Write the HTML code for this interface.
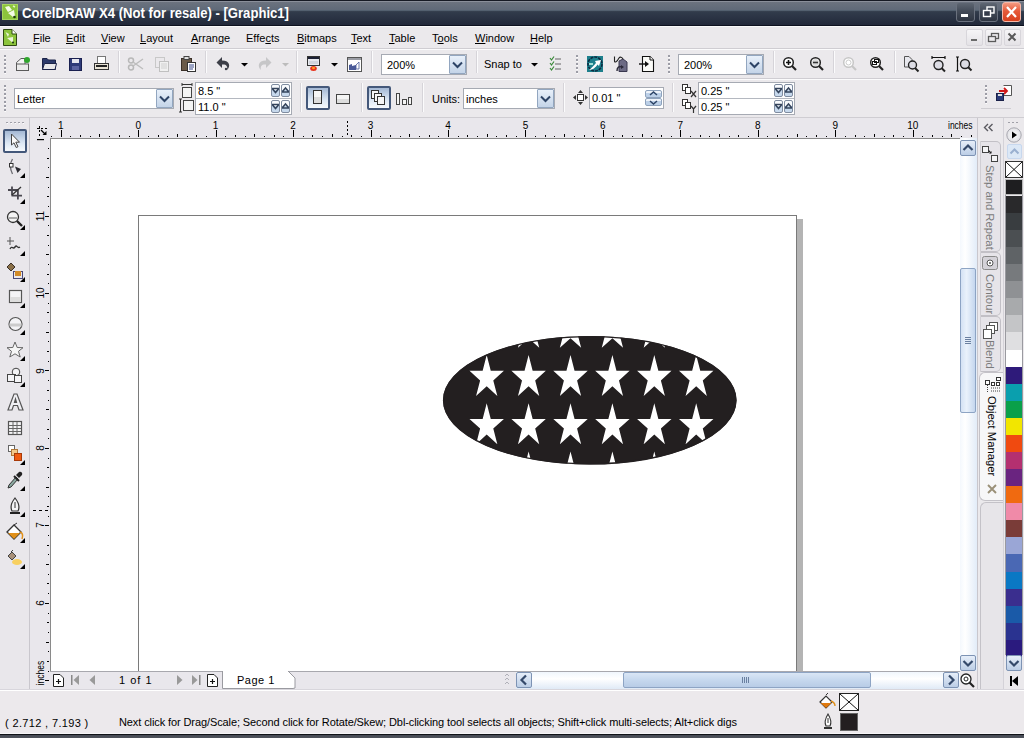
<!DOCTYPE html><html><head><meta charset="utf-8"><style>
*{margin:0;padding:0;box-sizing:border-box}
html,body{width:1024px;height:738px;overflow:hidden;background:#ECE9EC;font-family:"Liberation Sans",sans-serif;font-size:12px;color:#000}
.a{position:absolute}
svg{position:absolute;overflow:visible}
.txt{position:absolute;white-space:nowrap;font-size:12px;line-height:14px}
.mn{position:absolute;top:31px;font-size:11px;line-height:14px;white-space:nowrap;color:#000}
</style></head><body>
<div class="a" style="left:0;top:0;width:1024px;height:26px;background:linear-gradient(to bottom,#161a24 0px,#161a24 1px,#8a8f9a 1px,#8a8f9a 2px,#6c737f 2px,#5f6978 10px,#53606f 10px,#53606f 11px,#3a4452 11px,#313b4b 12px,#22293a 25px,#0e1220 25px,#0e1220 26px)"></div>
<svg style="left:2px;top:4px" width="16" height="16" viewBox="0 0 16 16" ><rect x="0" y="0" width="16" height="16" fill="#8cc43c"/><rect x="0.5" y="0.5" width="15" height="15" fill="none" stroke="#a6d65c"/><path d="M3 3 L7 2 L10 6 L6 8 Z" fill="#f4fbe6"/><path d="M6 9 L12 6 L13 12 L11 13 Z" fill="#f4fbe6"/><circle cx="12.5" cy="13" r="1.3" fill="#1d3a10"/><path d="M11 2 L13 3" stroke="#e4f4c8" stroke-width="1.5"/></svg>
<div class="txt" style="left:22px;top:5px;color:#fff;font-size:14px;line-height:16px;font-weight:bold;transform:scaleX(0.935);transform-origin:0 0">CorelDRAW X4 (Not for resale) - [Graphic1]</div>
<div class="a" style="left:956px;top:2px;width:19px;height:20px;border-radius:3px;background:linear-gradient(#5e6672,#434b58 45%,#2e3542);border:1px solid #6a717e"></div>
<div class="a" style="left:979px;top:2px;width:19px;height:20px;border-radius:3px;background:linear-gradient(#5e6672,#434b58 45%,#2e3542);border:1px solid #6a717e"></div>
<div class="a" style="left:1002px;top:2px;width:19px;height:20px;border-radius:3px;background:linear-gradient(#f49a80,#e65a3a 45%,#d8401e);border:1px solid #f7b8a8"></div>
<svg style="left:956px;top:2px" width="19" height="20" viewBox="0 0 19 20" ><rect x="5" y="12" width="7" height="3" fill="#fff"/></svg>
<svg style="left:979px;top:2px" width="19" height="20" viewBox="0 0 19 20" ><rect x="8" y="5" width="7" height="6" fill="none" stroke="#fff" stroke-width="1.4"/><rect x="4.5" y="8.5" width="7" height="6" fill="#353c4a" stroke="#fff" stroke-width="1.4"/></svg>
<svg style="left:1002px;top:2px" width="19" height="20" viewBox="0 0 19 20" ><path d="M5 5 L14 15 M14 5 L5 15" stroke="#fff" stroke-width="2.2"/></svg>
<div class="a" style="left:0px;top:26px;width:1024px;height:1px;background:#fafafa"></div>
<div class="a" style="left:0px;top:27px;width:1024px;height:22px;background:#ebe9ec"></div>
<div class="a" style="left:0px;top:48px;width:1024px;height:1px;background:#cfcdd2"></div>
<div class="a" style="left:0px;top:49px;width:1024px;height:1px;background:#fbfbfc"></div>
<svg style="left:3px;top:29px" width="14" height="17" viewBox="0 0 14 17" ><path d="M0.5 0.5 H9 L13.5 5 V16.5 H0.5 Z" fill="#8cc43c" stroke="#2f4a12"/><path d="M9 0.5 V5 H13.5" fill="#fff" stroke="#2f4a12"/><path d="M2.5 3 L6 5 L5 8 Z M4 9 L10 8 L10 14 Z" fill="#eaf5d8"/><circle cx="10" cy="13.5" r="1" fill="#173010"/></svg>
<div class="mn" style="left:33px"><u>F</u>ile</div>
<div class="mn" style="left:66px"><u>E</u>dit</div>
<div class="mn" style="left:101px"><u>V</u>iew</div>
<div class="mn" style="left:140px"><u>L</u>ayout</div>
<div class="mn" style="left:191px"><u>A</u>rrange</div>
<div class="mn" style="left:246px">Effe<u>c</u>ts</div>
<div class="mn" style="left:297px"><u>B</u>itmaps</div>
<div class="mn" style="left:351px"><u>T</u>ext</div>
<div class="mn" style="left:389px"><u>T</u>able</div>
<div class="mn" style="left:432px">T<u>o</u>ols</div>
<div class="mn" style="left:475px"><u>W</u>indow</div>
<div class="mn" style="left:530px"><u>H</u>elp</div>
<div class="a" style="left:966px;top:29px;width:17px;height:17px;border:1px solid #d8d6db;border-radius:2px;background:linear-gradient(#f6f5f7,#e4e2e6)"></div>
<div class="a" style="left:985px;top:29px;width:17px;height:17px;border:1px solid #d8d6db;border-radius:2px;background:linear-gradient(#f6f5f7,#e4e2e6)"></div>
<div class="a" style="left:1004px;top:29px;width:17px;height:17px;border:1px solid #d8d6db;border-radius:2px;background:linear-gradient(#f6f5f7,#e4e2e6)"></div>
<svg style="left:966px;top:29px" width="17" height="17" viewBox="0 0 17 17" ><rect x="5" y="10" width="6" height="2" fill="#6a6a6a"/></svg>
<svg style="left:985px;top:29px" width="17" height="17" viewBox="0 0 17 17" ><rect x="6.5" y="4.5" width="7" height="5" fill="none" stroke="#5a5a5a" stroke-width="1.3"/><rect x="3.5" y="7.5" width="7" height="5" fill="#eceaed" stroke="#5a5a5a" stroke-width="1.3"/></svg>
<svg style="left:1004px;top:29px" width="17" height="17" viewBox="0 0 17 17" ><path d="M4.5 4.5 L11.5 11.5 M11.5 4.5 L4.5 11.5" stroke="#5a5a5a" stroke-width="2"/></svg>
<div class="a" style="left:0px;top:50px;width:1024px;height:28px;background:#ebe9ec"></div>
<div class="a" style="left:0px;top:78px;width:1024px;height:1px;background:#cfcdd2"></div>
<div class="a" style="left:0px;top:79px;width:1024px;height:1px;background:#fbfbfc"></div>
<svg style="left:4px;top:55px" width="3" height="20" viewBox="0 0 3 20" ><rect x="0" y="0" width="2" height="2" fill="#9c9ca6"/><rect x="0.5" y="2" width="1.5" height="1" fill="#fff"/><rect x="0" y="4" width="2" height="2" fill="#9c9ca6"/><rect x="0.5" y="6" width="1.5" height="1" fill="#fff"/><rect x="0" y="8" width="2" height="2" fill="#9c9ca6"/><rect x="0.5" y="10" width="1.5" height="1" fill="#fff"/><rect x="0" y="12" width="2" height="2" fill="#9c9ca6"/><rect x="0.5" y="14" width="1.5" height="1" fill="#fff"/><rect x="0" y="16" width="2" height="2" fill="#9c9ca6"/><rect x="0.5" y="18" width="1.5" height="1" fill="#fff"/></svg>
<svg style="left:15px;top:56px" width="16" height="16" viewBox="0 0 16 16" ><path d="M1.5 6.5 L6 2.5 H10 V14.5 H1.5 Z" fill="#f4f4f4" stroke="#5a5a5a"/><rect x="1.5" y="8" width="12" height="6.5" fill="#eaeaea" stroke="#5a5a5a"/><circle cx="12" cy="4" r="3" fill="#2fa52c"/></svg>
<svg style="left:42px;top:57px" width="15" height="14" viewBox="0 0 15 14" ><path d="M0.5 1.5 H5 L6.5 3 H13.5 V12.5 H0.5 Z" fill="#2c3a6a" stroke="#1c2448"/><path d="M2.5 6.5 H14.5 L13 12.5 H0.5 Z" fill="#e8e8ea" stroke="#1c2448"/></svg>
<svg style="left:69px;top:58px" width="13" height="13" viewBox="0 0 13 13" ><rect x="0.5" y="0.5" width="12" height="12" fill="#2e3a78" stroke="#1a2050"/><rect x="3" y="1" width="7" height="4" fill="#e6e6ee"/><rect x="3" y="8" width="7" height="4" fill="#5a62a0"/></svg>
<svg style="left:94px;top:56px" width="15" height="15" viewBox="0 0 15 15" ><rect x="3.5" y="0.5" width="8" height="8" fill="#fff" stroke="#777"/><rect x="0.5" y="7.5" width="14" height="6" fill="#e8e2d4" stroke="#333"/><rect x="2" y="9" width="11" height="2" fill="#222"/></svg>
<div class="a" style="left:118px;top:51px;width:1px;height:22px;background:#d6d4d9"></div>
<div class="a" style="left:119px;top:51px;width:1px;height:22px;background:#fbfbfc"></div>
<svg style="left:128px;top:57px" width="16" height="14" viewBox="0 0 16 14" ><circle cx="3" cy="10.5" r="2.5" fill="none" stroke="#b8b8b8" stroke-width="1.5"/><circle cx="3" cy="3.5" r="2.5" fill="none" stroke="#b8b8b8" stroke-width="1.5"/><path d="M5 9 L15 2 M5 5 L15 12" stroke="#bdbdbd" stroke-width="1.5"/></svg>
<svg style="left:155px;top:57px" width="14" height="15" viewBox="0 0 14 15" ><rect x="0.5" y="0.5" width="9" height="10" fill="none" stroke="#c8c8c8"/><rect x="4.5" y="4.5" width="9" height="10" fill="#f0f0f0" stroke="#c0c0c0"/><path d="M6 7H12M6 9H12M6 11H12" stroke="#d0d0d0"/></svg>
<svg style="left:181px;top:56px" width="15" height="16" viewBox="0 0 15 16" ><rect x="0.5" y="2.5" width="10" height="12" fill="#6a5a48" stroke="#3a3028"/><rect x="3" y="0.5" width="5" height="3" fill="#ddd" stroke="#444"/><rect x="6.5" y="6.5" width="8" height="9" fill="#fff" stroke="#333"/><path d="M8 9H13M8 11H13M8 13H12" stroke="#3a4a8a"/></svg>
<div class="a" style="left:205px;top:51px;width:1px;height:22px;background:#d6d4d9"></div>
<div class="a" style="left:206px;top:51px;width:1px;height:22px;background:#fbfbfc"></div>
<svg style="left:216px;top:56px" width="16" height="16" viewBox="0 0 16 16" ><path d="M6 1 L0.5 6.5 L6 12 V8.5 C10 8 12 10 11 14 C14.5 11 14.5 4.5 6 4.5 Z" fill="#3d3f48"/><circle cx="10" cy="13" r="1.2" fill="#3d3f48"/></svg>
<svg style="left:240.5px;top:62.5px" width="7" height="4" viewBox="0 0 7 4" ><path d="M0 0 H7 L3.5 3.5 Z" fill="#000"/></svg>
<svg style="left:256px;top:56px" width="16" height="16" viewBox="0 0 16 16" ><path d="M10 1 L15.5 6.5 L10 12 V8.5 C6 8 4 10 5 14 C1.5 11 1.5 4.5 10 4.5 Z" fill="#c6c6c8"/></svg>
<svg style="left:281.5px;top:62.5px" width="7" height="4" viewBox="0 0 7 4" ><path d="M0 0 H7 L3.5 3.5 Z" fill="#bcbcbc"/></svg>
<div class="a" style="left:296px;top:51px;width:1px;height:22px;background:#d6d4d9"></div>
<div class="a" style="left:297px;top:51px;width:1px;height:22px;background:#fbfbfc"></div>
<svg style="left:307px;top:56px" width="14" height="16" viewBox="0 0 14 16" ><rect x="0.5" y="0.5" width="12" height="9" fill="#e6e8ee" stroke="#333"/><rect x="1" y="1" width="11" height="2" fill="#1c2034"/><rect x="2" y="5" width="9" height="3" fill="#d0d4dc"/><ellipse cx="6.5" cy="12.5" rx="3.3" ry="2.5" fill="#e8301a"/><ellipse cx="6.5" cy="12" rx="1.5" ry="1.2" fill="#f8a020"/></svg>
<svg style="left:331px;top:62.5px" width="7" height="4" viewBox="0 0 7 4" ><path d="M0 0 H7 L3.5 3.5 Z" fill="#000"/></svg>
<svg style="left:347px;top:57px" width="15" height="15" viewBox="0 0 15 15" ><rect x="0.5" y="0.5" width="14" height="14" fill="#fff" stroke="#555"/><rect x="1" y="1" width="13" height="2" fill="#9a9ca4"/><path d="M2 13 V8 L5 7 V9 L9 8 V13 Z" fill="#4a5a98"/><path d="M9 8 L12 5 V12 H9 Z" fill="#fff" stroke="#4a5a98" stroke-width="0.8"/></svg>
<div class="a" style="left:371px;top:51px;width:1px;height:22px;background:#d6d4d9"></div>
<div class="a" style="left:372px;top:51px;width:1px;height:22px;background:#fbfbfc"></div>
<div class="a" style="left:381px;top:54px;width:86px;height:21px;background:#fff;border:1px solid #a6aab3"></div>
<div class="a" style="left:449px;top:55px;width:17px;height:19px;border:1px solid #92a6c0;background:linear-gradient(#e8f0fa,#c4d4e8);border-radius:1px"></div>
<svg style="left:449px;top:55px" width="17" height="19" viewBox="0 0 17 19" ><path d="M4.0 7.5 L8.5 12.0 L13.0 7.5" fill="none" stroke="#2e4466" stroke-width="2"/></svg>
<div class="txt" style="left:387px;top:58px;font-size:11px">200%</div>
<div class="a" style="left:476px;top:51px;width:1px;height:22px;background:#d6d4d9"></div>
<div class="a" style="left:477px;top:51px;width:1px;height:22px;background:#fbfbfc"></div>
<div class="txt" style="left:484px;top:57px;font-size:11px">Snap to</div>
<svg style="left:531px;top:62.5px" width="7" height="4" viewBox="0 0 7 4" ><path d="M0 0 H7 L3.5 3.5 Z" fill="#000"/></svg>
<svg style="left:549px;top:56px" width="13" height="16" viewBox="0 0 13 16" ><path d="M1 2 L2.5 4 L5 0.5 M1 7 L2.5 9 L5 5.5 M1 12 L2.5 14 L5 10.5" stroke="#3a8a3a" fill="none" stroke-width="1.2"/><path d="M6 3H12M6 8H12M6 13H12" stroke="#666" stroke-width="1.2"/></svg>
<svg style="left:576px;top:55px" width="3" height="20" viewBox="0 0 3 20" ><rect x="0" y="0" width="2" height="2" fill="#9c9ca6"/><rect x="0.5" y="2" width="1.5" height="1" fill="#fff"/><rect x="0" y="4" width="2" height="2" fill="#9c9ca6"/><rect x="0.5" y="6" width="1.5" height="1" fill="#fff"/><rect x="0" y="8" width="2" height="2" fill="#9c9ca6"/><rect x="0.5" y="10" width="1.5" height="1" fill="#fff"/><rect x="0" y="12" width="2" height="2" fill="#9c9ca6"/><rect x="0.5" y="14" width="1.5" height="1" fill="#fff"/><rect x="0" y="16" width="2" height="2" fill="#9c9ca6"/><rect x="0.5" y="18" width="1.5" height="1" fill="#fff"/></svg>
<svg style="left:587px;top:56px" width="16" height="16" viewBox="0 0 16 16" ><rect x="0" y="0" width="16" height="16" fill="#1d7f8c"/><circle cx="8" cy="8" r="7" fill="none" stroke="#0c2a40" stroke-width="1.6" stroke-dasharray="3 1"/><path d="M2 14 C5 12 7 9 9 7 L8 5 L14 4 L12 10 L10.5 8.5 C9 11 6 14 2 14 Z" fill="#fff"/><path d="M2 8 H6" stroke="#cfe" stroke-width="1.5"/></svg>
<svg style="left:614px;top:56px" width="14" height="16" viewBox="0 0 14 16" ><path d="M5 5 L9 3 L13 6 V15.5 H5 Z" fill="#6c6a84" stroke="#3a3850"/><path d="M0.5 0.5 V5 C0.5 7 3 6 5 2 C6 0.5 8 1 9 3" fill="none" stroke="#222" stroke-width="1.1"/><path d="M3 15 C3 11 5 10 8 11" fill="none" stroke="#2a2838" stroke-width="1.4"/><path d="M7 9 L10 11 L7 13 Z" fill="#2a2838"/></svg>
<svg style="left:639px;top:56px" width="16" height="16" viewBox="0 0 16 16" ><path d="M3.5 0.5 H11 L14.5 4 V15.5 H3.5 Z" fill="#fbfbf8" stroke="#111" stroke-width="1.1"/><path d="M11 0.5 V4 H14.5" fill="#fff" stroke="#111"/><path d="M0 8 H8" stroke="#111" stroke-width="1.4"/><path d="M6 5 L10 8 L6 11 Z" fill="#111"/></svg>
<svg style="left:668px;top:55px" width="3" height="20" viewBox="0 0 3 20" ><rect x="0" y="0" width="2" height="2" fill="#9c9ca6"/><rect x="0.5" y="2" width="1.5" height="1" fill="#fff"/><rect x="0" y="4" width="2" height="2" fill="#9c9ca6"/><rect x="0.5" y="6" width="1.5" height="1" fill="#fff"/><rect x="0" y="8" width="2" height="2" fill="#9c9ca6"/><rect x="0.5" y="10" width="1.5" height="1" fill="#fff"/><rect x="0" y="12" width="2" height="2" fill="#9c9ca6"/><rect x="0.5" y="14" width="1.5" height="1" fill="#fff"/><rect x="0" y="16" width="2" height="2" fill="#9c9ca6"/><rect x="0.5" y="18" width="1.5" height="1" fill="#fff"/></svg>
<div class="a" style="left:678px;top:54px;width:86px;height:21px;background:#fff;border:1px solid #a6aab3"></div>
<div class="a" style="left:746px;top:55px;width:17px;height:19px;border:1px solid #92a6c0;background:linear-gradient(#e8f0fa,#c4d4e8);border-radius:1px"></div>
<svg style="left:746px;top:55px" width="17" height="19" viewBox="0 0 17 19" ><path d="M4.0 7.5 L8.5 12.0 L13.0 7.5" fill="none" stroke="#2e4466" stroke-width="2"/></svg>
<div class="txt" style="left:684px;top:58px;font-size:11px">200%</div>
<div class="a" style="left:773px;top:51px;width:1px;height:22px;background:#d6d4d9"></div>
<div class="a" style="left:774px;top:51px;width:1px;height:22px;background:#fbfbfc"></div>
<svg style="left:783px;top:57px" width="14" height="14" viewBox="0 0 14 14" ><circle cx="5.5" cy="5.5" r="4.8" fill="#fff" stroke="#222" stroke-width="1.5"/><path d="M3 5.5H8M5.5 3V8" stroke="#111" stroke-width="1.6"/><path d="M9 9 L13 13" stroke="#222" stroke-width="2.2"/></svg>
<svg style="left:810px;top:57px" width="14" height="14" viewBox="0 0 14 14" ><circle cx="5.5" cy="5.5" r="4.8" fill="#fff" stroke="#222" stroke-width="1.5"/><path d="M3 5.5H8" stroke="#111" stroke-width="1.6"/><circle cx="5.5" cy="5.5" r="3.5" fill="#888" opacity="0.3"/><path d="M9 9 L13 13" stroke="#222" stroke-width="2.2"/></svg>
<div class="a" style="left:833px;top:51px;width:1px;height:22px;background:#d6d4d9"></div>
<div class="a" style="left:834px;top:51px;width:1px;height:22px;background:#fbfbfc"></div>
<svg style="left:843px;top:57px" width="14" height="14" viewBox="0 0 14 14" ><circle cx="5.5" cy="5.5" r="4.8" fill="#fff" stroke="#c6c6c6" stroke-width="1.5"/><circle cx="5.5" cy="5.5" r="2.5" fill="none" stroke="#ccc"/><path d="M9 9 L13 13" stroke="#c6c6c6" stroke-width="2.2"/></svg>
<svg style="left:870px;top:57px" width="14" height="14" viewBox="0 0 14 14" ><circle cx="5.5" cy="5.5" r="4.8" fill="#fff" stroke="#222" stroke-width="1.5"/><rect x="2.5" y="4.5" width="4" height="3" fill="none" stroke="#111"/><rect x="4.5" y="2.5" width="4" height="3" fill="none" stroke="#111"/><path d="M9 9 L13 13" stroke="#222" stroke-width="2.2"/></svg>
<div class="a" style="left:894px;top:51px;width:1px;height:22px;background:#d6d4d9"></div>
<div class="a" style="left:895px;top:51px;width:1px;height:22px;background:#fbfbfc"></div>
<svg style="left:904px;top:56px" width="16" height="16" viewBox="0 0 16 16" ><path d="M0.5 0.5 H5 L8 3.5 V11 H0.5 Z" fill="#e8e8ee" stroke="#555"/><circle cx="8.5" cy="9" r="4" fill="#dcdce4" stroke="#222" stroke-width="1.4"/><path d="M11 12 L14.5 15.5" stroke="#222" stroke-width="2"/></svg>
<svg style="left:931px;top:56px" width="16" height="16" viewBox="0 0 16 16" ><path d="M1 1.5H14M1 0V3M14 0V3" stroke="#111" stroke-width="1.2"/><circle cx="7.5" cy="9" r="4.5" fill="#dcdce4" stroke="#222" stroke-width="1.4"/><path d="M10.5 12 L14 15.5" stroke="#222" stroke-width="2"/></svg>
<svg style="left:956px;top:56px" width="16" height="16" viewBox="0 0 16 16" ><path d="M1.5 1V15M0 1H3M0 15H3" stroke="#111" stroke-width="1.2"/><circle cx="9" cy="8" r="4.5" fill="#dcdce4" stroke="#222" stroke-width="1.4"/><path d="M12 11 L15.5 14.5" stroke="#222" stroke-width="2"/></svg>
<div class="a" style="left:0px;top:80px;width:1024px;height:37px;background:#ebe9ec"></div>
<div class="a" style="left:0px;top:117px;width:1024px;height:1px;background:#cfcdd2"></div>
<svg style="left:4px;top:85px" width="3" height="28" viewBox="0 0 3 28" ><rect x="0" y="0" width="2" height="2" fill="#9c9ca6"/><rect x="0.5" y="2" width="1.5" height="1" fill="#fff"/><rect x="0" y="4" width="2" height="2" fill="#9c9ca6"/><rect x="0.5" y="6" width="1.5" height="1" fill="#fff"/><rect x="0" y="8" width="2" height="2" fill="#9c9ca6"/><rect x="0.5" y="10" width="1.5" height="1" fill="#fff"/><rect x="0" y="12" width="2" height="2" fill="#9c9ca6"/><rect x="0.5" y="14" width="1.5" height="1" fill="#fff"/><rect x="0" y="16" width="2" height="2" fill="#9c9ca6"/><rect x="0.5" y="18" width="1.5" height="1" fill="#fff"/><rect x="0" y="20" width="2" height="2" fill="#9c9ca6"/><rect x="0.5" y="22" width="1.5" height="1" fill="#fff"/><rect x="0" y="24" width="2" height="2" fill="#9c9ca6"/><rect x="0.5" y="26" width="1.5" height="1" fill="#fff"/></svg>
<div class="a" style="left:14px;top:88px;width:160px;height:21px;background:#fff;border:1px solid #a6aab3"></div>
<div class="a" style="left:156px;top:89px;width:17px;height:19px;border:1px solid #92a6c0;background:linear-gradient(#e8f0fa,#c4d4e8);border-radius:1px"></div>
<svg style="left:156px;top:89px" width="17" height="19" viewBox="0 0 17 19" ><path d="M4.0 7.5 L8.5 12.0 L13.0 7.5" fill="none" stroke="#2e4466" stroke-width="2"/></svg>
<div class="txt" style="left:17px;top:92px;font-size:11px">Letter</div>
<svg style="left:180px;top:83px" width="14" height="15" viewBox="0 0 14 15" ><path d="M2 1.5H12M2 0V3M12 0V3" stroke="#333" stroke-width="1"/><rect x="2.5" y="4.5" width="9" height="10" fill="#f4f4f4" stroke="#444"/></svg>
<svg style="left:178px;top:98px" width="16" height="15" viewBox="0 0 16 15" ><path d="M2.5 1V14M1 1H4M1 14H4" stroke="#333" stroke-width="1"/><rect x="5.5" y="2.5" width="10" height="10" fill="#f4f4f4" stroke="#444"/></svg>
<div class="a" style="left:195px;top:82px;width:97px;height:33px;background:#fff;border:1px solid #a6aab3"></div>
<div class="a" style="left:196px;top:98px;width:95px;height:1px;background:#b4b8c0"></div>
<div class="txt" style="left:198px;top:84px;font-size:11px">8.5 "</div>
<div class="a" style="left:271px;top:84px;width:9px;height:13px;border:1px solid #7f8ca0;border-radius:2px;background:linear-gradient(#f8fafd 45%,#c6d8ec 45%)"></div>
<svg style="left:271px;top:84px" width="9" height="13" viewBox="0 0 9 13" ><path d="M1 4.5 H8 M1.5 5 L4.5 8.5 L7.5 5" fill="none" stroke="#34445c" stroke-width="1.6"/></svg>
<div class="a" style="left:281px;top:84px;width:9px;height:13px;border:1px solid #7f8ca0;border-radius:2px;background:linear-gradient(#f8fafd 45%,#c6d8ec 45%)"></div>
<svg style="left:281px;top:84px" width="9" height="13" viewBox="0 0 9 13" ><path d="M1 8 H8 M1.5 7.5 L4.5 4 L7.5 7.5" fill="none" stroke="#34445c" stroke-width="1.6"/></svg>
<div class="txt" style="left:198px;top:100px;font-size:11px">11.0 "</div>
<div class="a" style="left:271px;top:100px;width:9px;height:13px;border:1px solid #7f8ca0;border-radius:2px;background:linear-gradient(#f8fafd 45%,#c6d8ec 45%)"></div>
<svg style="left:271px;top:100px" width="9" height="13" viewBox="0 0 9 13" ><path d="M1 4.5 H8 M1.5 5 L4.5 8.5 L7.5 5" fill="none" stroke="#34445c" stroke-width="1.6"/></svg>
<div class="a" style="left:281px;top:100px;width:9px;height:13px;border:1px solid #7f8ca0;border-radius:2px;background:linear-gradient(#f8fafd 45%,#c6d8ec 45%)"></div>
<svg style="left:281px;top:100px" width="9" height="13" viewBox="0 0 9 13" ><path d="M1 8 H8 M1.5 7.5 L4.5 4 L7.5 7.5" fill="none" stroke="#34445c" stroke-width="1.6"/></svg>
<div class="a" style="left:300px;top:83px;width:1px;height:29px;background:#d6d4d9"></div>
<div class="a" style="left:301px;top:83px;width:1px;height:29px;background:#fbfbfc"></div>
<div class="a" style="left:306px;top:86px;width:24px;height:24px;border:2px solid #44587a;border-radius:2px;background:linear-gradient(#a4b8d4,#dce7f4 60%,#f6f9fc)"></div>
<svg style="left:306px;top:86px" width="24" height="24" viewBox="0 0 24 24" ><rect x="7.5" y="4.5" width="8" height="13" fill="#f6f6f6" stroke="#333"/><rect x="8" y="11" width="7" height="6" fill="#ddd"/></svg>
<svg style="left:336px;top:94px" width="15" height="11" viewBox="0 0 15 11" ><rect x="0.5" y="0.5" width="13" height="9" fill="#f4f4f4" stroke="#444"/><rect x="1" y="5" width="12" height="4" fill="#ddd"/></svg>
<div class="a" style="left:361px;top:83px;width:1px;height:29px;background:#d6d4d9"></div>
<div class="a" style="left:362px;top:83px;width:1px;height:29px;background:#fbfbfc"></div>
<div class="a" style="left:367px;top:86px;width:24px;height:24px;border:2px solid #44587a;border-radius:2px;background:linear-gradient(#a4b8d4,#dce7f4 60%,#f6f9fc)"></div>
<svg style="left:367px;top:86px" width="24" height="24" viewBox="0 0 24 24" ><rect x="4.5" y="4.5" width="7" height="8" fill="#f6f6f6" stroke="#333"/><rect x="7.5" y="7.5" width="7" height="8" fill="#f6f6f6" stroke="#333"/><rect x="10.5" y="10.5" width="7" height="8" fill="#f6f6f6" stroke="#333"/></svg>
<svg style="left:396px;top:93px" width="17" height="13" viewBox="0 0 17 13" ><rect x="0.5" y="0.5" width="3" height="11" fill="#f4f4f4" stroke="#444"/><rect x="6.5" y="6.5" width="4" height="5" fill="#f4f4f4" stroke="#444"/><rect x="12.5" y="4.5" width="3" height="7" fill="#f4f4f4" stroke="#444"/></svg>
<div class="a" style="left:422px;top:83px;width:1px;height:29px;background:#d6d4d9"></div>
<div class="a" style="left:423px;top:83px;width:1px;height:29px;background:#fbfbfc"></div>
<div class="txt" style="left:432px;top:92px;font-size:11px">Units:</div>
<div class="a" style="left:463px;top:88px;width:92px;height:21px;background:#fff;border:1px solid #a6aab3"></div>
<div class="a" style="left:537px;top:89px;width:17px;height:19px;border:1px solid #92a6c0;background:linear-gradient(#e8f0fa,#c4d4e8);border-radius:1px"></div>
<svg style="left:537px;top:89px" width="17" height="19" viewBox="0 0 17 19" ><path d="M4.0 7.5 L8.5 12.0 L13.0 7.5" fill="none" stroke="#2e4466" stroke-width="2"/></svg>
<div class="txt" style="left:466px;top:92px;font-size:11px">inches</div>
<div class="a" style="left:563px;top:83px;width:1px;height:29px;background:#d6d4d9"></div>
<div class="a" style="left:564px;top:83px;width:1px;height:29px;background:#fbfbfc"></div>
<svg style="left:573px;top:90px" width="15" height="15" viewBox="0 0 15 15" ><rect x="4.5" y="4.5" width="6" height="6" fill="#fff" stroke="#333"/><path d="M7.5 0 L10 3 H5 Z M7.5 15 L10 12 H5 Z M0 7.5 L3 5 V10 Z M15 7.5 L12 5 V10 Z" fill="#333"/></svg>
<div class="a" style="left:589px;top:87px;width:75px;height:22px;background:#fff;border:1px solid #a6aab3"></div>
<div class="txt" style="left:592px;top:91px;font-size:11px">0.01 "</div>
<div class="a" style="left:645px;top:90px;width:17px;height:8px;border:1px solid #8ea2bc;border-radius:2px;background:linear-gradient(#eef3fa 40%,#bcd0e8 40%)"></div>
<div class="a" style="left:645px;top:98px;width:17px;height:8px;border:1px solid #8ea2bc;border-radius:2px;background:linear-gradient(#eef3fa 40%,#bcd0e8 40%)"></div>
<svg style="left:645px;top:90px" width="17" height="16" viewBox="0 0 17 16" ><path d="M5 5 L8.5 2 L12 5" fill="none" stroke="#2e4466" stroke-width="1.5"/><path d="M5 11 L8.5 14 L12 11" fill="none" stroke="#2e4466" stroke-width="1.5"/></svg>
<div class="a" style="left:672px;top:83px;width:1px;height:29px;background:#d6d4d9"></div>
<div class="a" style="left:673px;top:83px;width:1px;height:29px;background:#fbfbfc"></div>
<svg style="left:682px;top:84px" width="16" height="14" viewBox="0 0 16 14" ><rect x="0.5" y="0.5" width="5" height="6" fill="#fff" stroke="#333"/><rect x="3.5" y="3.5" width="5" height="6" fill="#fff" stroke="#333"/><path d="M9 7 L14 13 M14 7 L9 13" stroke="#333" stroke-width="1.2"/></svg>
<svg style="left:682px;top:99px" width="16" height="14" viewBox="0 0 16 14" ><rect x="0.5" y="0.5" width="5" height="6" fill="#fff" stroke="#333"/><rect x="3.5" y="3.5" width="5" height="6" fill="#fff" stroke="#333"/><path d="M9 7 L11.5 10 L14 7 M11.5 10 V14" fill="none" stroke="#333" stroke-width="1.2"/></svg>
<div class="a" style="left:698px;top:82px;width:97px;height:33px;background:#fff;border:1px solid #a6aab3"></div>
<div class="a" style="left:699px;top:98px;width:95px;height:1px;background:#b4b8c0"></div>
<div class="txt" style="left:701px;top:84px;font-size:11px">0.25 "</div>
<div class="a" style="left:774px;top:84px;width:9px;height:13px;border:1px solid #7f8ca0;border-radius:2px;background:linear-gradient(#f8fafd 45%,#c6d8ec 45%)"></div>
<svg style="left:774px;top:84px" width="9" height="13" viewBox="0 0 9 13" ><path d="M1 4.5 H8 M1.5 5 L4.5 8.5 L7.5 5" fill="none" stroke="#34445c" stroke-width="1.6"/></svg>
<div class="a" style="left:784px;top:84px;width:9px;height:13px;border:1px solid #7f8ca0;border-radius:2px;background:linear-gradient(#f8fafd 45%,#c6d8ec 45%)"></div>
<svg style="left:784px;top:84px" width="9" height="13" viewBox="0 0 9 13" ><path d="M1 8 H8 M1.5 7.5 L4.5 4 L7.5 7.5" fill="none" stroke="#34445c" stroke-width="1.6"/></svg>
<div class="txt" style="left:701px;top:100px;font-size:11px">0.25 "</div>
<div class="a" style="left:774px;top:100px;width:9px;height:13px;border:1px solid #7f8ca0;border-radius:2px;background:linear-gradient(#f8fafd 45%,#c6d8ec 45%)"></div>
<svg style="left:774px;top:100px" width="9" height="13" viewBox="0 0 9 13" ><path d="M1 4.5 H8 M1.5 5 L4.5 8.5 L7.5 5" fill="none" stroke="#34445c" stroke-width="1.6"/></svg>
<div class="a" style="left:784px;top:100px;width:9px;height:13px;border:1px solid #7f8ca0;border-radius:2px;background:linear-gradient(#f8fafd 45%,#c6d8ec 45%)"></div>
<svg style="left:784px;top:100px" width="9" height="13" viewBox="0 0 9 13" ><path d="M1 8 H8 M1.5 7.5 L4.5 4 L7.5 7.5" fill="none" stroke="#34445c" stroke-width="1.6"/></svg>
<svg style="left:985px;top:85px" width="3" height="20" viewBox="0 0 3 20" ><rect x="0" y="0" width="2" height="2" fill="#9c9ca6"/><rect x="0.5" y="2" width="1.5" height="1" fill="#fff"/><rect x="0" y="4" width="2" height="2" fill="#9c9ca6"/><rect x="0.5" y="6" width="1.5" height="1" fill="#fff"/><rect x="0" y="8" width="2" height="2" fill="#9c9ca6"/><rect x="0.5" y="10" width="1.5" height="1" fill="#fff"/><rect x="0" y="12" width="2" height="2" fill="#9c9ca6"/><rect x="0.5" y="14" width="1.5" height="1" fill="#fff"/><rect x="0" y="16" width="2" height="2" fill="#9c9ca6"/><rect x="0.5" y="18" width="1.5" height="1" fill="#fff"/></svg>
<svg style="left:996px;top:85px" width="18" height="16" viewBox="0 0 18 16" ><path d="M7.5 0.5 H15.5 V10.5 H7.5" fill="#fff" stroke="#555"/><path d="M3 6 H11 M8 3 L11 6 L8 9" fill="none" stroke="#d01818" stroke-width="1.8"/><rect x="0.5" y="8.5" width="7" height="7" fill="#2a3a78" stroke="#1a2048"/><rect x="2" y="9" width="4" height="2" fill="#ddd"/></svg>
<div class="a" style="left:981px;top:108px;width:30px;height:1px;background:#cfcdd2"></div>
<div class="a" style="left:0px;top:118px;width:29px;height:572px;background:#e9e7eb"></div>
<div class="a" style="left:29px;top:118px;width:1px;height:572px;background:#c9c7cd"></div>
<svg style="left:6px;top:122px" width="20" height="3" viewBox="0 0 20 3" ><rect x="0" y="0" width="2" height="1" fill="#a0a0a8"/><rect x="1" y="1" width="1" height="1" fill="#fff"/><rect x="4" y="0" width="2" height="1" fill="#a0a0a8"/><rect x="5" y="1" width="1" height="1" fill="#fff"/><rect x="8" y="0" width="2" height="1" fill="#a0a0a8"/><rect x="9" y="1" width="1" height="1" fill="#fff"/><rect x="12" y="0" width="2" height="1" fill="#a0a0a8"/><rect x="13" y="1" width="1" height="1" fill="#fff"/><rect x="16" y="0" width="2" height="1" fill="#a0a0a8"/><rect x="17" y="1" width="1" height="1" fill="#fff"/></svg>
<div class="a" style="left:3px;top:129px;width:24px;height:24px;border:2px solid #44587a;border-radius:2px;background:linear-gradient(#a4b8d4,#dce7f4 60%,#f6f9fc)"></div>
<svg style="left:3px;top:129px" width="24" height="24" viewBox="0 0 24 24" ><path d="M8.5 5 V16 L11 13.8 L13.2 18.5 L15 17.7 L12.8 13.2 H16.5 Z" fill="#fafafa" stroke="#444" stroke-width="1"/></svg>
<svg style="left:5px;top:158px" width="20" height="18" viewBox="0 0 20 18" ><path d="M7.5 1 C5 5 5 11 7.5 16" fill="none" stroke="#6a6a70" stroke-width="1.3"/><rect x="4.5" y="5.5" width="3.5" height="3.5" fill="#fff" stroke="#333"/><path d="M10 8.5 L16 11 L12.5 15 Z" fill="#2a2a30"/></svg>
<svg style="left:20px;top:173px" width="6" height="5" viewBox="0 0 6 5" ><path d="M5 0 V5 H0 Z" fill="#000"/></svg>
<svg style="left:5px;top:184px" width="20" height="18" viewBox="0 0 20 18" ><path d="M3 6 H13.5 M7 2.5 V11.5 M6.5 11.7 H17 M12.9 6 V15.5" stroke="#4a4850" stroke-width="1.8" fill="none"/><path d="M7 11 L16 3" stroke="#333" stroke-width="1.3"/></svg>
<svg style="left:20px;top:199px" width="6" height="5" viewBox="0 0 6 5" ><path d="M5 0 V5 H0 Z" fill="#000"/></svg>
<svg style="left:5px;top:210px" width="20" height="18" viewBox="0 0 20 18" ><circle cx="8" cy="7" r="5.5" fill="#f4f4f4" stroke="#333" stroke-width="1.3"/><path d="M4 8 H12" stroke="#aaa" stroke-width="2"/><path d="M12 11 L17 16" stroke="#222" stroke-width="2.4"/></svg>
<svg style="left:20px;top:225px" width="6" height="5" viewBox="0 0 6 5" ><path d="M5 0 V5 H0 Z" fill="#000"/></svg>
<svg style="left:5px;top:236px" width="20" height="18" viewBox="0 0 20 18" ><path d="M2 5 H9 M5 1 V9" stroke="#555" stroke-width="1"/><path d="M5 13 C7 9 8 14 10 11 C12 8 12 13 15 11" fill="none" stroke="#333" stroke-width="1.4"/></svg>
<svg style="left:20px;top:251px" width="6" height="5" viewBox="0 0 6 5" ><path d="M5 0 V5 H0 Z" fill="#000"/></svg>
<svg style="left:5px;top:262px" width="20" height="18" viewBox="0 0 20 18" ><path d="M2 5 L6 1 L10 5 L6 9 Z" fill="#8a7048" stroke="#3a3028"/><rect x="8.5" y="9.5" width="9" height="7" fill="none" stroke="#4a4a78"/><rect x="10" y="9" width="6" height="5" fill="#d08a28"/></svg>
<svg style="left:20px;top:277px" width="6" height="5" viewBox="0 0 6 5" ><path d="M5 0 V5 H0 Z" fill="#000"/></svg>
<svg style="left:5px;top:288px" width="20" height="18" viewBox="0 0 20 18" ><rect x="4.5" y="2.5" width="12" height="12" fill="#f4f4f6" stroke="#555" stroke-width="1.2"/><rect x="5" y="9" width="11" height="5" fill="#ddd"/></svg>
<svg style="left:20px;top:303px" width="6" height="5" viewBox="0 0 6 5" ><path d="M5 0 V5 H0 Z" fill="#000"/></svg>
<svg style="left:5px;top:315px" width="20" height="18" viewBox="0 0 20 18" ><circle cx="10.5" cy="9" r="6.5" fill="#f4f4f6" stroke="#555" stroke-width="1.2"/><path d="M4.5 10 H16.5" stroke="#ccc" stroke-width="3"/></svg>
<svg style="left:20px;top:330px" width="6" height="5" viewBox="0 0 6 5" ><path d="M5 0 V5 H0 Z" fill="#000"/></svg>
<svg style="left:5px;top:341px" width="20" height="18" viewBox="0 0 20 18" ><path d="M10 1 L12.2 6.5 L18 6.7 L13.5 10.3 L15.2 16 L10 12.8 L4.8 16 L6.5 10.3 L2 6.7 L7.8 6.5 Z" fill="#f6f6f6" stroke="#666" stroke-width="1"/></svg>
<svg style="left:20px;top:356px" width="6" height="5" viewBox="0 0 6 5" ><path d="M5 0 V5 H0 Z" fill="#000"/></svg>
<svg style="left:5px;top:367px" width="20" height="18" viewBox="0 0 20 18" ><circle cx="11" cy="5" r="3.8" fill="#f4f4f6" stroke="#444"/><rect x="2.5" y="7.5" width="8" height="7" fill="#f4f4f6" stroke="#444"/><rect x="9.5" y="8.5" width="7" height="7" fill="#f4f4f6" stroke="#444"/></svg>
<svg style="left:20px;top:382px" width="6" height="5" viewBox="0 0 6 5" ><path d="M5 0 V5 H0 Z" fill="#000"/></svg>
<svg style="left:5px;top:393px" width="20" height="18" viewBox="0 0 20 18" ><path d="M3 17 L9 1 H12 L18 17 H14 L12.5 12.5 H8.5 L7 17 Z M9.5 9.5 H11.5 L10.5 6 Z" fill="#f0f0f4" stroke="#555" stroke-width="1.2"/></svg>
<svg style="left:5px;top:419px" width="20" height="18" viewBox="0 0 20 18" ><rect x="3.5" y="2.5" width="13" height="13" fill="#f4f4f6" stroke="#555" stroke-width="1.2"/><path d="M4 6.5H16M4 9.5H16M4 12.5H16M8 3V15M12 3V15" stroke="#666"/></svg>
<svg style="left:5px;top:445px" width="20" height="18" viewBox="0 0 20 18" ><rect x="3.5" y="0.5" width="6" height="6" fill="#fff" stroke="#666"/><rect x="6.5" y="4.5" width="6" height="6" fill="#f2c88a" stroke="#b07838"/><rect x="9.5" y="8.5" width="7" height="7" fill="#f05a10" stroke="#a83a08"/></svg>
<svg style="left:20px;top:460px" width="6" height="5" viewBox="0 0 6 5" ><path d="M5 0 V5 H0 Z" fill="#000"/></svg>
<svg style="left:5px;top:471px" width="20" height="18" viewBox="0 0 20 18" ><path d="M3 17 L4 14 L11 6 L13 8 L6 16 Z" fill="#8aa8a0" stroke="#333" stroke-width="1"/><path d="M11 4 L14 1 C16 0 18 2 17 4 L14 7 Z" fill="#222"/><path d="M9 5 L14 10" stroke="#222" stroke-width="2"/></svg>
<svg style="left:20px;top:486px" width="6" height="5" viewBox="0 0 6 5" ><path d="M5 0 V5 H0 Z" fill="#000"/></svg>
<svg style="left:5px;top:497px" width="20" height="18" viewBox="0 0 20 18" ><path d="M10 1 C6 6 5 10 7 14 H13 C15 10 14 6 10 1 Z" fill="#f4f4f6" stroke="#333" stroke-width="1.2"/><path d="M10 5 V11" stroke="#333"/><rect x="5" y="15" width="10" height="2" fill="#222"/></svg>
<svg style="left:20px;top:512px" width="6" height="5" viewBox="0 0 6 5" ><path d="M5 0 V5 H0 Z" fill="#000"/></svg>
<svg style="left:5px;top:523px" width="20" height="18" viewBox="0 0 20 18" ><path d="M2 9 L9 2 L16 9 L9 16 Z" fill="#fff" stroke="#333" stroke-width="1.3"/><path d="M3 10 L15 10 L9 16 Z" fill="#e0901a"/><path d="M9 2 L12 0" stroke="#333"/><path d="M15 9 C18 10 18 13 17 16" fill="none" stroke="#e0901a" stroke-width="1.5"/></svg>
<svg style="left:20px;top:538px" width="6" height="5" viewBox="0 0 6 5" ><path d="M5 0 V5 H0 Z" fill="#000"/></svg>
<svg style="left:5px;top:549px" width="20" height="18" viewBox="0 0 20 18" ><path d="M3 7 L7 3 L11 7 L7 11 Z" fill="#a89078" stroke="#444"/><path d="M6 3 L8 1" stroke="#444"/><ellipse cx="12" cy="13" rx="5" ry="3" fill="#f8d060"/></svg>
<svg style="left:20px;top:564px" width="6" height="5" viewBox="0 0 6 5" ><path d="M5 0 V5 H0 Z" fill="#000"/></svg>
<div class="a" style="left:30px;top:118px;width:947px;height:20px;background:#e9e7ec"></div>
<div class="a" style="left:30px;top:138px;width:20px;height:551px;background:#e9e7ec"></div>
<svg style="left:0px;top:0px" width="1024" height="140" viewBox="0 0 1024 140" ><g fill="#000"><rect x="51" y="136" width="1" height="1"/><rect x="61" y="130" width="1" height="7"/><rect x="70" y="136" width="1" height="1"/><rect x="80" y="135" width="1" height="2"/><rect x="90" y="136" width="1" height="1"/><rect x="99" y="134" width="1" height="3"/><rect x="109" y="136" width="1" height="1"/><rect x="119" y="135" width="1" height="2"/><rect x="129" y="136" width="1" height="1"/><rect x="138" y="130" width="1" height="7"/><rect x="148" y="136" width="1" height="1"/><rect x="158" y="135" width="1" height="2"/><rect x="167" y="136" width="1" height="1"/><rect x="177" y="134" width="1" height="3"/><rect x="187" y="136" width="1" height="1"/><rect x="196" y="135" width="1" height="2"/><rect x="206" y="136" width="1" height="1"/><rect x="216" y="130" width="1" height="7"/><rect x="225" y="136" width="1" height="1"/><rect x="235" y="135" width="1" height="2"/><rect x="245" y="136" width="1" height="1"/><rect x="254" y="134" width="1" height="3"/><rect x="264" y="136" width="1" height="1"/><rect x="274" y="135" width="1" height="2"/><rect x="283" y="136" width="1" height="1"/><rect x="293" y="130" width="1" height="7"/><rect x="303" y="136" width="1" height="1"/><rect x="312" y="135" width="1" height="2"/><rect x="322" y="136" width="1" height="1"/><rect x="332" y="134" width="1" height="3"/><rect x="342" y="136" width="1" height="1"/><rect x="351" y="135" width="1" height="2"/><rect x="361" y="136" width="1" height="1"/><rect x="371" y="130" width="1" height="7"/><rect x="380" y="136" width="1" height="1"/><rect x="390" y="135" width="1" height="2"/><rect x="400" y="136" width="1" height="1"/><rect x="409" y="134" width="1" height="3"/><rect x="419" y="136" width="1" height="1"/><rect x="429" y="135" width="1" height="2"/><rect x="438" y="136" width="1" height="1"/><rect x="448" y="130" width="1" height="7"/><rect x="458" y="136" width="1" height="1"/><rect x="467" y="135" width="1" height="2"/><rect x="477" y="136" width="1" height="1"/><rect x="487" y="134" width="1" height="3"/><rect x="496" y="136" width="1" height="1"/><rect x="506" y="135" width="1" height="2"/><rect x="516" y="136" width="1" height="1"/><rect x="525" y="130" width="1" height="7"/><rect x="535" y="136" width="1" height="1"/><rect x="545" y="135" width="1" height="2"/><rect x="554" y="136" width="1" height="1"/><rect x="564" y="134" width="1" height="3"/><rect x="574" y="136" width="1" height="1"/><rect x="584" y="135" width="1" height="2"/><rect x="593" y="136" width="1" height="1"/><rect x="603" y="130" width="1" height="7"/><rect x="613" y="136" width="1" height="1"/><rect x="622" y="135" width="1" height="2"/><rect x="632" y="136" width="1" height="1"/><rect x="642" y="134" width="1" height="3"/><rect x="651" y="136" width="1" height="1"/><rect x="661" y="135" width="1" height="2"/><rect x="671" y="136" width="1" height="1"/><rect x="680" y="130" width="1" height="7"/><rect x="690" y="136" width="1" height="1"/><rect x="700" y="135" width="1" height="2"/><rect x="709" y="136" width="1" height="1"/><rect x="719" y="134" width="1" height="3"/><rect x="729" y="136" width="1" height="1"/><rect x="738" y="135" width="1" height="2"/><rect x="748" y="136" width="1" height="1"/><rect x="758" y="130" width="1" height="7"/><rect x="767" y="136" width="1" height="1"/><rect x="777" y="135" width="1" height="2"/><rect x="787" y="136" width="1" height="1"/><rect x="797" y="134" width="1" height="3"/><rect x="806" y="136" width="1" height="1"/><rect x="816" y="135" width="1" height="2"/><rect x="826" y="136" width="1" height="1"/><rect x="835" y="130" width="1" height="7"/><rect x="845" y="136" width="1" height="1"/><rect x="855" y="135" width="1" height="2"/><rect x="864" y="136" width="1" height="1"/><rect x="874" y="134" width="1" height="3"/><rect x="884" y="136" width="1" height="1"/><rect x="893" y="135" width="1" height="2"/><rect x="903" y="136" width="1" height="1"/><rect x="913" y="130" width="1" height="7"/><rect x="922" y="136" width="1" height="1"/><rect x="932" y="135" width="1" height="2"/><rect x="942" y="136" width="1" height="1"/><rect x="951" y="134" width="1" height="3"/><rect x="961" y="136" width="1" height="1"/><rect x="971" y="135" width="1" height="2"/></g></svg>
<div class="txt" style="left:40.7px;top:121px;width:40px;text-align:center;font-size:10px;line-height:10px">1</div>
<div class="txt" style="left:118.2px;top:121px;width:40px;text-align:center;font-size:10px;line-height:10px">0</div>
<div class="txt" style="left:195.6px;top:121px;width:40px;text-align:center;font-size:10px;line-height:10px">1</div>
<div class="txt" style="left:273.1px;top:121px;width:40px;text-align:center;font-size:10px;line-height:10px">2</div>
<div class="txt" style="left:350.6px;top:121px;width:40px;text-align:center;font-size:10px;line-height:10px">3</div>
<div class="txt" style="left:428.0px;top:121px;width:40px;text-align:center;font-size:10px;line-height:10px">4</div>
<div class="txt" style="left:505.5px;top:121px;width:40px;text-align:center;font-size:10px;line-height:10px">5</div>
<div class="txt" style="left:582.9px;top:121px;width:40px;text-align:center;font-size:10px;line-height:10px">6</div>
<div class="txt" style="left:660.3px;top:121px;width:40px;text-align:center;font-size:10px;line-height:10px">7</div>
<div class="txt" style="left:737.8px;top:121px;width:40px;text-align:center;font-size:10px;line-height:10px">8</div>
<div class="txt" style="left:815.2px;top:121px;width:40px;text-align:center;font-size:10px;line-height:10px">9</div>
<div class="txt" style="left:892.7px;top:121px;width:40px;text-align:center;font-size:10px;line-height:10px">10</div>
<div class="txt" style="left:948px;top:121px;font-size:10px;line-height:10px;transform:scaleX(0.85);transform-origin:0 0">inches</div>
<svg style="left:347px;top:121px" width="2" height="16" viewBox="0 0 2 16" ><path d="M0.5 0 V16" stroke="#000" stroke-dasharray="2 2"/></svg>
<svg style="left:0px;top:0px" width="60" height="700" viewBox="0 0 60 700" ><g fill="#000"><rect x="48" y="148" width="1" height="1"/><rect x="47" y="158" width="2" height="1"/><rect x="48" y="167" width="1" height="1"/><rect x="46" y="177" width="3" height="1"/><rect x="48" y="187" width="1" height="1"/><rect x="47" y="196" width="2" height="1"/><rect x="48" y="206" width="1" height="1"/><rect x="45" y="216" width="4" height="1"/><rect x="48" y="225" width="1" height="1"/><rect x="47" y="235" width="2" height="1"/><rect x="48" y="245" width="1" height="1"/><rect x="46" y="254" width="3" height="1"/><rect x="48" y="264" width="1" height="1"/><rect x="47" y="274" width="2" height="1"/><rect x="48" y="283" width="1" height="1"/><rect x="45" y="293" width="4" height="1"/><rect x="48" y="303" width="1" height="1"/><rect x="47" y="312" width="2" height="1"/><rect x="48" y="322" width="1" height="1"/><rect x="46" y="332" width="3" height="1"/><rect x="48" y="341" width="1" height="1"/><rect x="47" y="351" width="2" height="1"/><rect x="48" y="361" width="1" height="1"/><rect x="45" y="370" width="4" height="1"/><rect x="48" y="380" width="1" height="1"/><rect x="47" y="390" width="2" height="1"/><rect x="48" y="400" width="1" height="1"/><rect x="46" y="409" width="3" height="1"/><rect x="48" y="419" width="1" height="1"/><rect x="47" y="429" width="2" height="1"/><rect x="48" y="438" width="1" height="1"/><rect x="45" y="448" width="4" height="1"/><rect x="48" y="458" width="1" height="1"/><rect x="47" y="467" width="2" height="1"/><rect x="48" y="477" width="1" height="1"/><rect x="46" y="487" width="3" height="1"/><rect x="48" y="496" width="1" height="1"/><rect x="47" y="506" width="2" height="1"/><rect x="48" y="516" width="1" height="1"/><rect x="45" y="525" width="4" height="1"/><rect x="48" y="535" width="1" height="1"/><rect x="47" y="545" width="2" height="1"/><rect x="48" y="554" width="1" height="1"/><rect x="46" y="564" width="3" height="1"/><rect x="48" y="574" width="1" height="1"/><rect x="47" y="583" width="2" height="1"/><rect x="48" y="593" width="1" height="1"/><rect x="45" y="603" width="4" height="1"/><rect x="48" y="613" width="1" height="1"/><rect x="47" y="622" width="2" height="1"/><rect x="48" y="632" width="1" height="1"/><rect x="46" y="642" width="3" height="1"/><rect x="48" y="651" width="1" height="1"/><rect x="47" y="661" width="2" height="1"/><rect x="48" y="671" width="1" height="1"/><rect x="45" y="680" width="4" height="1"/></g></svg>
<div class="txt" style="left:20.5px;top:597.9px;width:40px;height:10px;text-align:center;font-size:10px;line-height:10px;transform:rotate(-90deg)">6</div>
<div class="txt" style="left:20.5px;top:520.4px;width:40px;height:10px;text-align:center;font-size:10px;line-height:10px;transform:rotate(-90deg)">7</div>
<div class="txt" style="left:20.5px;top:443.0px;width:40px;height:10px;text-align:center;font-size:10px;line-height:10px;transform:rotate(-90deg)">8</div>
<div class="txt" style="left:20.5px;top:365.5px;width:40px;height:10px;text-align:center;font-size:10px;line-height:10px;transform:rotate(-90deg)">9</div>
<div class="txt" style="left:20.5px;top:288.1px;width:40px;height:10px;text-align:center;font-size:10px;line-height:10px;transform:rotate(-90deg)">10</div>
<div class="txt" style="left:20.5px;top:210.6px;width:40px;height:10px;text-align:center;font-size:10px;line-height:10px;transform:rotate(-90deg)">11</div>
<div class="txt" style="left:20.5px;top:667.8px;width:40px;height:10px;text-align:center;font-size:10px;line-height:10px;transform:rotate(-90deg) scaleX(0.85)">inches</div>
<svg style="left:33px;top:510px" width="16" height="2" viewBox="0 0 16 2" ><path d="M0 0.5 H16" stroke="#000" stroke-dasharray="3 3"/></svg>
<svg style="left:30px;top:118px" width="30" height="30" viewBox="0 0 30 30" ><path d="M7 10.5H10M11 10.5H13M15 10.5H17M9.5 8V10M9.5 12V14M9.5 16V18" stroke="#000" stroke-width="1"/><path d="M11 12 L15.5 16.5" stroke="#000" stroke-width="1.2"/><path d="M16.5 13 V17 H12.5 Z" fill="#000"/><rect x="7" y="21" width="7" height="1.2" fill="#000"/><rect x="21" y="18" width="1" height="1" fill="#000"/></svg>
<div class="a" style="left:50px;top:138px;width:910px;height:1px;background:#8a8a8a"></div>
<div class="a" style="left:50px;top:138px;width:1px;height:551px;background:#8a8a8a"></div>
<div class="a" style="left:51px;top:139px;width:909px;height:532px;background:#fff"></div>
<div class="a" style="left:138px;top:215px;width:659px;height:460px;border-left:1px solid #7a7a7a;border-top:1px solid #7a7a7a;border-right:1px solid #7a7a7a;background:#fff"></div>
<div class="a" style="left:797px;top:219px;width:6px;height:452px;background:#b4b4b4"></div>
<svg style="left:0px;top:0px" width="1024" height="738" viewBox="0 0 1024 738" ><defs><clipPath id="ec"><ellipse cx="589.75" cy="400.25" rx="146.75" ry="64.25"/></clipPath></defs><ellipse cx="589.75" cy="400.25" rx="146.75" ry="64.25" fill="#231f20"/><g clip-path="url(#ec)" fill="#fff"><polygon points="486.70,306.80 490.76,322.48 503.91,322.49 493.28,332.18 497.34,347.86 486.70,338.17 476.06,347.86 480.12,332.18 469.49,322.49 482.64,322.48"/><polygon points="528.60,306.80 532.66,322.48 545.81,322.49 535.18,332.18 539.24,347.86 528.60,338.17 517.96,347.86 522.02,332.18 511.39,322.49 524.54,322.48"/><polygon points="570.50,306.80 574.56,322.48 587.71,322.49 577.08,332.18 581.14,347.86 570.50,338.17 559.86,347.86 563.92,332.18 553.29,322.49 566.44,322.48"/><polygon points="612.40,306.80 616.46,322.48 629.61,322.49 618.98,332.18 623.04,347.86 612.40,338.17 601.76,347.86 605.82,332.18 595.19,322.49 608.34,322.48"/><polygon points="654.30,306.80 658.36,322.48 671.51,322.49 660.88,332.18 664.94,347.86 654.30,338.17 643.66,347.86 647.72,332.18 637.09,322.49 650.24,322.48"/><polygon points="696.20,306.80 700.26,322.48 713.41,322.49 702.78,332.18 706.84,347.86 696.20,338.17 685.56,347.86 689.62,332.18 678.99,322.49 692.14,322.48"/><polygon points="486.70,355.00 490.76,370.68 503.91,370.69 493.28,380.38 497.34,396.06 486.70,386.37 476.06,396.06 480.12,380.38 469.49,370.69 482.64,370.68"/><polygon points="528.60,355.00 532.66,370.68 545.81,370.69 535.18,380.38 539.24,396.06 528.60,386.37 517.96,396.06 522.02,380.38 511.39,370.69 524.54,370.68"/><polygon points="570.50,355.00 574.56,370.68 587.71,370.69 577.08,380.38 581.14,396.06 570.50,386.37 559.86,396.06 563.92,380.38 553.29,370.69 566.44,370.68"/><polygon points="612.40,355.00 616.46,370.68 629.61,370.69 618.98,380.38 623.04,396.06 612.40,386.37 601.76,396.06 605.82,380.38 595.19,370.69 608.34,370.68"/><polygon points="654.30,355.00 658.36,370.68 671.51,370.69 660.88,380.38 664.94,396.06 654.30,386.37 643.66,396.06 647.72,380.38 637.09,370.69 650.24,370.68"/><polygon points="696.20,355.00 700.26,370.68 713.41,370.69 702.78,380.38 706.84,396.06 696.20,386.37 685.56,396.06 689.62,380.38 678.99,370.69 692.14,370.68"/><polygon points="486.70,403.20 490.76,418.88 503.91,418.89 493.28,428.58 497.34,444.26 486.70,434.57 476.06,444.26 480.12,428.58 469.49,418.89 482.64,418.88"/><polygon points="528.60,403.20 532.66,418.88 545.81,418.89 535.18,428.58 539.24,444.26 528.60,434.57 517.96,444.26 522.02,428.58 511.39,418.89 524.54,418.88"/><polygon points="570.50,403.20 574.56,418.88 587.71,418.89 577.08,428.58 581.14,444.26 570.50,434.57 559.86,444.26 563.92,428.58 553.29,418.89 566.44,418.88"/><polygon points="612.40,403.20 616.46,418.88 629.61,418.89 618.98,428.58 623.04,444.26 612.40,434.57 601.76,444.26 605.82,428.58 595.19,418.89 608.34,418.88"/><polygon points="654.30,403.20 658.36,418.88 671.51,418.89 660.88,428.58 664.94,444.26 654.30,434.57 643.66,444.26 647.72,428.58 637.09,418.89 650.24,418.88"/><polygon points="696.20,403.20 700.26,418.88 713.41,418.89 702.78,428.58 706.84,444.26 696.20,434.57 685.56,444.26 689.62,428.58 678.99,418.89 692.14,418.88"/><polygon points="486.70,451.40 490.76,467.08 503.91,467.09 493.28,476.78 497.34,492.46 486.70,482.77 476.06,492.46 480.12,476.78 469.49,467.09 482.64,467.08"/><polygon points="528.60,451.40 532.66,467.08 545.81,467.09 535.18,476.78 539.24,492.46 528.60,482.77 517.96,492.46 522.02,476.78 511.39,467.09 524.54,467.08"/><polygon points="570.50,451.40 574.56,467.08 587.71,467.09 577.08,476.78 581.14,492.46 570.50,482.77 559.86,492.46 563.92,476.78 553.29,467.09 566.44,467.08"/><polygon points="612.40,451.40 616.46,467.08 629.61,467.09 618.98,476.78 623.04,492.46 612.40,482.77 601.76,492.46 605.82,476.78 595.19,467.09 608.34,467.08"/><polygon points="654.30,451.40 658.36,467.08 671.51,467.09 660.88,476.78 664.94,492.46 654.30,482.77 643.66,492.46 647.72,476.78 637.09,467.09 650.24,467.08"/><polygon points="696.20,451.40 700.26,467.08 713.41,467.09 702.78,476.78 706.84,492.46 696.20,482.77 685.56,492.46 689.62,476.78 678.99,467.09 692.14,467.08"/></g><ellipse cx="589.75" cy="400.25" rx="146.15" ry="63.65" fill="none" stroke="#231f20" stroke-width="1.4"/></svg>
<div class="a" style="left:960px;top:138px;width:17px;height:533px;background:linear-gradient(to right,#f4f8fd,#ffffff 30%,#e2ecf8)"></div>
<div class="a" style="left:960px;top:140px;width:16px;height:16px;border:1px solid #7d93b4;border-radius:2px;background:linear-gradient(#e6eef9,#bccee6)"></div>
<svg style="left:960px;top:140px" width="16" height="16" viewBox="0 0 16 16" ><path d="M3.5 10 L8 5.5 L12.5 10" fill="none" stroke="#34496a" stroke-width="2.2"/></svg>
<div class="a" style="left:960px;top:655px;width:16px;height:16px;border:1px solid #7d93b4;border-radius:2px;background:linear-gradient(#e6eef9,#bccee6)"></div>
<svg style="left:960px;top:655px" width="16" height="16" viewBox="0 0 16 16" ><path d="M3.5 6 L8 10.5 L12.5 6" fill="none" stroke="#34496a" stroke-width="2.2"/></svg>
<div class="a" style="left:960px;top:268px;width:16px;height:145px;border:1px solid #8da4c4;border-radius:2px;background:linear-gradient(to right,#d4e2f4,#eaf2fb 40%,#c4d6ee)"></div>
<svg style="left:965px;top:337px" width="6" height="7" viewBox="0 0 6 7" ><path d="M0 0.5H6M0 2.5H6M0 4.5H6M0 6.5H6" stroke="#6a80a0"/></svg>
<div class="a" style="left:977px;top:118px;width:1px;height:572px;background:#c9c7cd"></div>
<div class="a" style="left:978px;top:118px;width:26px;height:572px;background:#ebe9ec"></div>
<svg style="left:983px;top:123px" width="12" height="10" viewBox="0 0 12 10" ><path d="M5 1 L1.5 4.5 L5 8 M9.5 1 L6 4.5 L9.5 8" fill="none" stroke="#5a5a60" stroke-width="1.4"/></svg>
<div class="a" style="left:980px;top:141px;width:21px;height:111px;background:#e6e4e9;border:1px solid #c2c0c6;border-left:1px solid #d0ced4;border-radius:0 5px 5px 0"></div>
<div class="a" style="left:980px;top:252px;width:21px;height:64px;background:#e6e4e9;border:1px solid #c2c0c6;border-left:1px solid #d0ced4;border-radius:0 5px 5px 0"></div>
<div class="a" style="left:980px;top:316px;width:21px;height:56px;background:#e6e4e9;border:1px solid #c2c0c6;border-left:1px solid #d0ced4;border-radius:0 5px 5px 0"></div>
<div class="a" style="left:979px;top:372px;width:25px;height:129px;background:#f7f7f8;border:1px solid #c4c2c8;border-right:none;border-radius:6px 0 0 6px"></div>
<div class="a" style="left:980px;top:502px;width:23px;height:188px;border-left:1px solid #c4c2c8;border-top:1px solid #c4c2c8;border-radius:6px 0 0 0;background:#e7e5e9"></div>
<div class="txt" style="left:995px;top:165px;font-size:11.3px;line-height:11.3px;color:#7a7a7a;transform-origin:0 0;transform:rotate(90deg)">Step and Repeat</div>
<div class="txt" style="left:995px;top:274px;font-size:11.3px;line-height:11.3px;color:#7a7a7a;transform-origin:0 0;transform:rotate(90deg)">Contour</div>
<div class="txt" style="left:995px;top:340px;font-size:11.3px;line-height:11.3px;color:#7a7a7a;transform-origin:0 0;transform:rotate(90deg)">Blend</div>
<div class="txt" style="left:997px;top:396px;font-size:11.3px;line-height:11.3px;color:#000;transform-origin:0 0;transform:rotate(90deg)">Object Manager</div>
<svg style="left:982px;top:146px" width="17" height="17" viewBox="0 0 17 17" ><rect x="0.5" y="0.5" width="6" height="6" fill="#f4f4f6" stroke="#444"/><rect x="9.5" y="9.5" width="6" height="6" fill="#f4f4f6" stroke="#444"/><path d="M6.5 4.5 L9 7" fill="none" stroke="#222" stroke-width="1.1"/><path d="M9.5 5 V7.5 H7 Z" fill="#222"/></svg>
<svg style="left:982px;top:256px" width="16" height="14" viewBox="0 0 16 14" ><rect x="0.5" y="0.5" width="15" height="13" rx="2" fill="#d4d2d8" stroke="#8a8a8a"/><circle cx="8" cy="7" r="3" fill="#fff" stroke="#555"/><circle cx="8" cy="7" r="1" fill="#555"/></svg>
<svg style="left:983px;top:322px" width="15" height="17" viewBox="0 0 15 17" ><rect x="6.5" y="0.5" width="8" height="8" fill="#fff" stroke="#555"/><rect x="3.5" y="3.5" width="8" height="8" fill="#fff" stroke="#555"/><rect x="0.5" y="7.5" width="8" height="9" fill="#fff" stroke="#555"/></svg>
<svg style="left:985px;top:377px" width="16" height="16" viewBox="0 0 16 16" ><rect x="11.5" y="0.5" width="4" height="3" fill="#fff" stroke="#333"/><rect x="0.5" y="3.5" width="4" height="4" fill="#fff" stroke="#333"/><rect x="6.5" y="5.5" width="3" height="3" fill="#fff" stroke="#333"/><rect x="11.5" y="5.5" width="3" height="3" fill="#fff" stroke="#333"/><path d="M2.5 8 V15 M6 11 H15 M6 14 H15" stroke="#444" stroke-dasharray="1 1"/></svg>
<svg style="left:987px;top:484px" width="10" height="10" viewBox="0 0 10 10" ><path d="M1 1 L9 9 M9 1 L1 9" stroke="#9a9078" stroke-width="1.9"/></svg>
<div class="a" style="left:1004px;top:118px;width:20px;height:572px;background:#ebe9ec"></div>
<div class="a" style="left:1003px;top:118px;width:1px;height:572px;background:#d4d2d8"></div>
<svg style="left:1008px;top:122px" width="12" height="2" viewBox="0 0 12 2" ><rect x="0" y="0" width="2" height="1" fill="#a0a0a8"/><rect x="4" y="0" width="2" height="1" fill="#a0a0a8"/><rect x="8" y="0" width="2" height="1" fill="#a0a0a8"/></svg>
<svg style="left:1006px;top:127px" width="16" height="16" viewBox="0 0 16 16" ><circle cx="8" cy="8" r="7.2" fill="url(#pg)" stroke="#a8a8b0"/><defs><radialGradient id="pg"><stop offset="0" stop-color="#fff"/><stop offset="1" stop-color="#e0e0e4"/></radialGradient></defs><path d="M6 4.5 L11 8 L6 11.5 Z" fill="#000"/></svg>
<div class="a" style="left:1007px;top:144px;width:15px;height:15px;border:1px solid #c8d8ee;border-radius:2px;background:#dce8f6"></div>
<svg style="left:1007px;top:144px" width="15" height="15" viewBox="0 0 15 15" ><path d="M3.5 9.5 L7.5 5.5 L11.5 9.5" fill="none" stroke="#9ab0d0" stroke-width="2"/></svg>
<div class="a" style="left:1005px;top:161px;width:18px;height:17px;background:#fff;border:1px solid #333"></div>
<svg style="left:1005px;top:161px" width="18" height="17" viewBox="0 0 18 17" ><path d="M1 1 L17 16 M17 1 L1 16" stroke="#111" stroke-width="1"/></svg>
<div class="a" style="left:1005px;top:179px;width:18px;height:16px;background:#fff;border:1px solid #bbb"></div>
<div class="a" style="left:1006px;top:180px;width:16px;height:14px;background:#1e1e20"></div>
<div class="a" style="left:1006px;top:195.80px;width:16px;height:17.1px;background:#29292b"></div>
<div class="a" style="left:1006px;top:212.88px;width:16px;height:17.1px;background:#393d40"></div>
<div class="a" style="left:1006px;top:229.96px;width:16px;height:17.1px;background:#4b4f52"></div>
<div class="a" style="left:1006px;top:247.04px;width:16px;height:17.1px;background:#5f6366"></div>
<div class="a" style="left:1006px;top:264.12px;width:16px;height:17.1px;background:#777a7d"></div>
<div class="a" style="left:1006px;top:281.20px;width:16px;height:17.1px;background:#8f9194"></div>
<div class="a" style="left:1006px;top:298.28px;width:16px;height:17.1px;background:#a8aaac"></div>
<div class="a" style="left:1006px;top:315.36px;width:16px;height:17.1px;background:#c4c5c7"></div>
<div class="a" style="left:1006px;top:332.44px;width:16px;height:17.1px;background:#dfdfe1"></div>
<div class="a" style="left:1006px;top:349.52px;width:16px;height:17.1px;background:#ffffff"></div>
<div class="a" style="left:1006px;top:366.60px;width:16px;height:17.1px;background:#2e1a7a"></div>
<div class="a" style="left:1006px;top:383.68px;width:16px;height:17.1px;background:#0a9fae"></div>
<div class="a" style="left:1006px;top:400.76px;width:16px;height:17.1px;background:#0aa04a"></div>
<div class="a" style="left:1006px;top:417.84px;width:16px;height:17.1px;background:#f2e600"></div>
<div class="a" style="left:1006px;top:434.92px;width:16px;height:17.1px;background:#f04a10"></div>
<div class="a" style="left:1006px;top:452.00px;width:16px;height:17.1px;background:#b43070"></div>
<div class="a" style="left:1006px;top:469.08px;width:16px;height:17.1px;background:#6a2480"></div>
<div class="a" style="left:1006px;top:486.16px;width:16px;height:17.1px;background:#f06a10"></div>
<div class="a" style="left:1006px;top:503.24px;width:16px;height:17.1px;background:#f08aa8"></div>
<div class="a" style="left:1006px;top:520.32px;width:16px;height:17.1px;background:#7a3c38"></div>
<div class="a" style="left:1006px;top:537.40px;width:16px;height:17.1px;background:#9aa6d6"></div>
<div class="a" style="left:1006px;top:554.48px;width:16px;height:17.1px;background:#4a68b4"></div>
<div class="a" style="left:1006px;top:571.56px;width:16px;height:17.1px;background:#0a78c4"></div>
<div class="a" style="left:1006px;top:588.64px;width:16px;height:17.1px;background:#3a2e8e"></div>
<div class="a" style="left:1006px;top:605.72px;width:16px;height:17.1px;background:#1a5aa8"></div>
<div class="a" style="left:1006px;top:622.80px;width:16px;height:17.1px;background:#2a3390"></div>
<div class="a" style="left:1006px;top:639.88px;width:16px;height:17.1px;background:#2a1a7e"></div>
<div class="a" style="left:1005px;top:195px;width:1px;height:460px;background:#9a9aa0"></div>
<div class="a" style="left:1022px;top:195px;width:1px;height:460px;background:#9a9aa0"></div>
<div class="a" style="left:1006px;top:655px;width:16px;height:16px;border:1px solid #7d93b4;border-radius:2px;background:linear-gradient(#e6eef9,#bccee6)"></div>
<svg style="left:1006px;top:655px" width="16" height="16" viewBox="0 0 16 16" ><path d="M3.5 6 L8 10.5 L12.5 6" fill="none" stroke="#34496a" stroke-width="2.2"/></svg>
<svg style="left:1009px;top:675px" width="10" height="12" viewBox="0 0 10 12" ><rect x="1" y="1" width="2" height="10" fill="#000"/><path d="M9 1 L3 6 L9 11 Z" fill="#000"/></svg>
<div class="a" style="left:50px;top:671px;width:910px;height:1px;background:#a8a8ae"></div>
<div class="a" style="left:50px;top:672px;width:466px;height:17px;background:#e9e7ec"></div>
<svg style="left:53px;top:674px" width="11" height="13" viewBox="0 0 11 13" ><path d="M0.5 0.5 H7 L10.5 4 V12.5 H0.5 Z" fill="#fff" stroke="#222"/><path d="M3 7.5 H8 M5.5 5 V10" stroke="#111" stroke-width="1.2"/></svg>
<svg style="left:71px;top:675px" width="9" height="10" viewBox="0 0 9 10" ><rect x="0" y="0" width="1.5" height="10" fill="#888"/><path d="M8 0 L2.5 5 L8 10 Z" fill="#999"/></svg>
<svg style="left:89px;top:675px" width="7" height="10" viewBox="0 0 7 10" ><path d="M6 0 L0.5 5 L6 10 Z" fill="#999"/></svg>
<div class="txt" style="left:119px;top:673px;font-size:11px;letter-spacing:1px">1 of 1</div>
<svg style="left:176px;top:675px" width="7" height="10" viewBox="0 0 7 10" ><path d="M1 0 L6.5 5 L1 10 Z" fill="#999"/></svg>
<svg style="left:192px;top:675px" width="9" height="10" viewBox="0 0 9 10" ><path d="M0 0 L5.5 5 L0 10 Z" fill="#999"/><rect x="7" y="0" width="1.5" height="10" fill="#888"/></svg>
<svg style="left:207px;top:674px" width="11" height="13" viewBox="0 0 11 13" ><path d="M0.5 0.5 H7 L10.5 4 V12.5 H0.5 Z" fill="#fff" stroke="#222"/><path d="M3 7.5 H8 M5.5 5 V10" stroke="#111" stroke-width="1.2"/></svg>
<svg style="left:222px;top:671px" width="74" height="18" viewBox="0 0 74 18" ><path d="M0.5 0 V17.5 H71 L73 17 V7 L66 0" fill="#fff" stroke="#9a9aa0"/></svg>
<div class="txt" style="left:237px;top:673px;font-size:11px;letter-spacing:0.5px">Page 1</div>
<svg style="left:505px;top:673px" width="5" height="14" viewBox="0 0 5 14" ><path d="M0 3 L2 1 L4 3 M0 7 L2 5 L4 7 M0 11 L2 9 L4 11" fill="none" stroke="#b0b0b8"/></svg>
<div class="a" style="left:516px;top:672px;width:444px;height:17px;background:linear-gradient(#f0f6fd,#ffffff 40%,#e0eaf6)"></div>
<div class="a" style="left:516px;top:672px;width:16px;height:16px;border:1px solid #7d93b4;border-radius:2px;background:linear-gradient(#e6eef9,#bccee6)"></div>
<svg style="left:516px;top:672px" width="16" height="16" viewBox="0 0 16 16" ><path d="M10 3.5 L5.5 8 L10 12.5" fill="none" stroke="#34496a" stroke-width="2.2"/></svg>
<div class="a" style="left:943px;top:672px;width:16px;height:16px;border:1px solid #7d93b4;border-radius:2px;background:linear-gradient(#e6eef9,#bccee6)"></div>
<svg style="left:943px;top:672px" width="16" height="16" viewBox="0 0 16 16" ><path d="M6 3.5 L10.5 8 L6 12.5" fill="none" stroke="#34496a" stroke-width="2.2"/></svg>
<div class="a" style="left:623px;top:672px;width:248px;height:16px;border:1px solid #8da4c4;border-radius:2px;background:linear-gradient(#dae6f5,#c6d8ee 50%,#b8cce6)"></div>
<svg style="left:742px;top:677px" width="7" height="6" viewBox="0 0 7 6" ><path d="M0.5 0V6M2.5 0V6M4.5 0V6M6.5 0V6" stroke="#6a80a0"/></svg>
<svg style="left:960px;top:673px" width="16" height="16" viewBox="0 0 16 16" ><circle cx="6" cy="6" r="5" fill="#fff" stroke="#222" stroke-width="1.3"/><circle cx="6" cy="6" r="2" fill="none" stroke="#222"/><path d="M9.5 9.5 L14 14" stroke="#222" stroke-width="2.2"/></svg>
<div class="a" style="left:0px;top:689px;width:1024px;height:1px;background:#d8d6dc"></div>
<div class="a" style="left:0px;top:690px;width:1024px;height:1px;background:#ffffff"></div>
<div class="a" style="left:0px;top:691px;width:1024px;height:42px;background:#ece9ec"></div>
<div class="txt" style="left:5px;top:716px;font-size:11px;letter-spacing:0.35px">( 2.712 , 7.193 )</div>
<div class="txt" style="left:119px;top:715px;font-size:11px;letter-spacing:-0.1px">Next click for Drag/Scale; Second click for Rotate/Skew; Dbl-clicking tool selects all objects; Shift+click multi-selects; Alt+click digs</div>
<svg style="left:819px;top:694px" width="18" height="17" viewBox="0 0 18 17" ><path d="M1 8 L7 2 L13 8 L7 14 Z" fill="#fff" stroke="#333" stroke-width="1.2"/><path d="M1.5 9 H12.5 L7 14 Z" fill="#e07a10"/><path d="M7 1 L9 -1" stroke="#333"/><path d="M12 7 C15 8 16 10 16 12" fill="none" stroke="#e0901a" stroke-width="1.4"/></svg>
<div class="a" style="left:839px;top:693px;width:20px;height:18px;background:#fff;border:1px solid #222"></div>
<svg style="left:839px;top:693px" width="20" height="18" viewBox="0 0 20 18" ><path d="M1 1 L19 17 M19 1 L1 17" stroke="#111" stroke-width="1"/></svg>
<svg style="left:822px;top:713px" width="12" height="18" viewBox="0 0 12 18" ><path d="M6 1 C3 6 2 9 4 13 H8 C10 9 9 6 6 1 Z" fill="#fff" stroke="#333" stroke-width="1.1"/><path d="M6 5 V10" stroke="#333"/><rect x="2" y="14" width="8" height="2" fill="#333"/></svg>
<div class="a" style="left:840px;top:713px;width:18px;height:18px;background:#231f20;border:1px solid #666"></div>
<div class="a" style="left:0px;top:733px;width:1024px;height:1px;background:#f6f5f7"></div>
<div class="a" style="left:0px;top:734px;width:1024px;height:4px;background:linear-gradient(#101218 0px,#101218 1.5px,#474b55 1.5px,#50545d 4px)"></div>
</body></html>
